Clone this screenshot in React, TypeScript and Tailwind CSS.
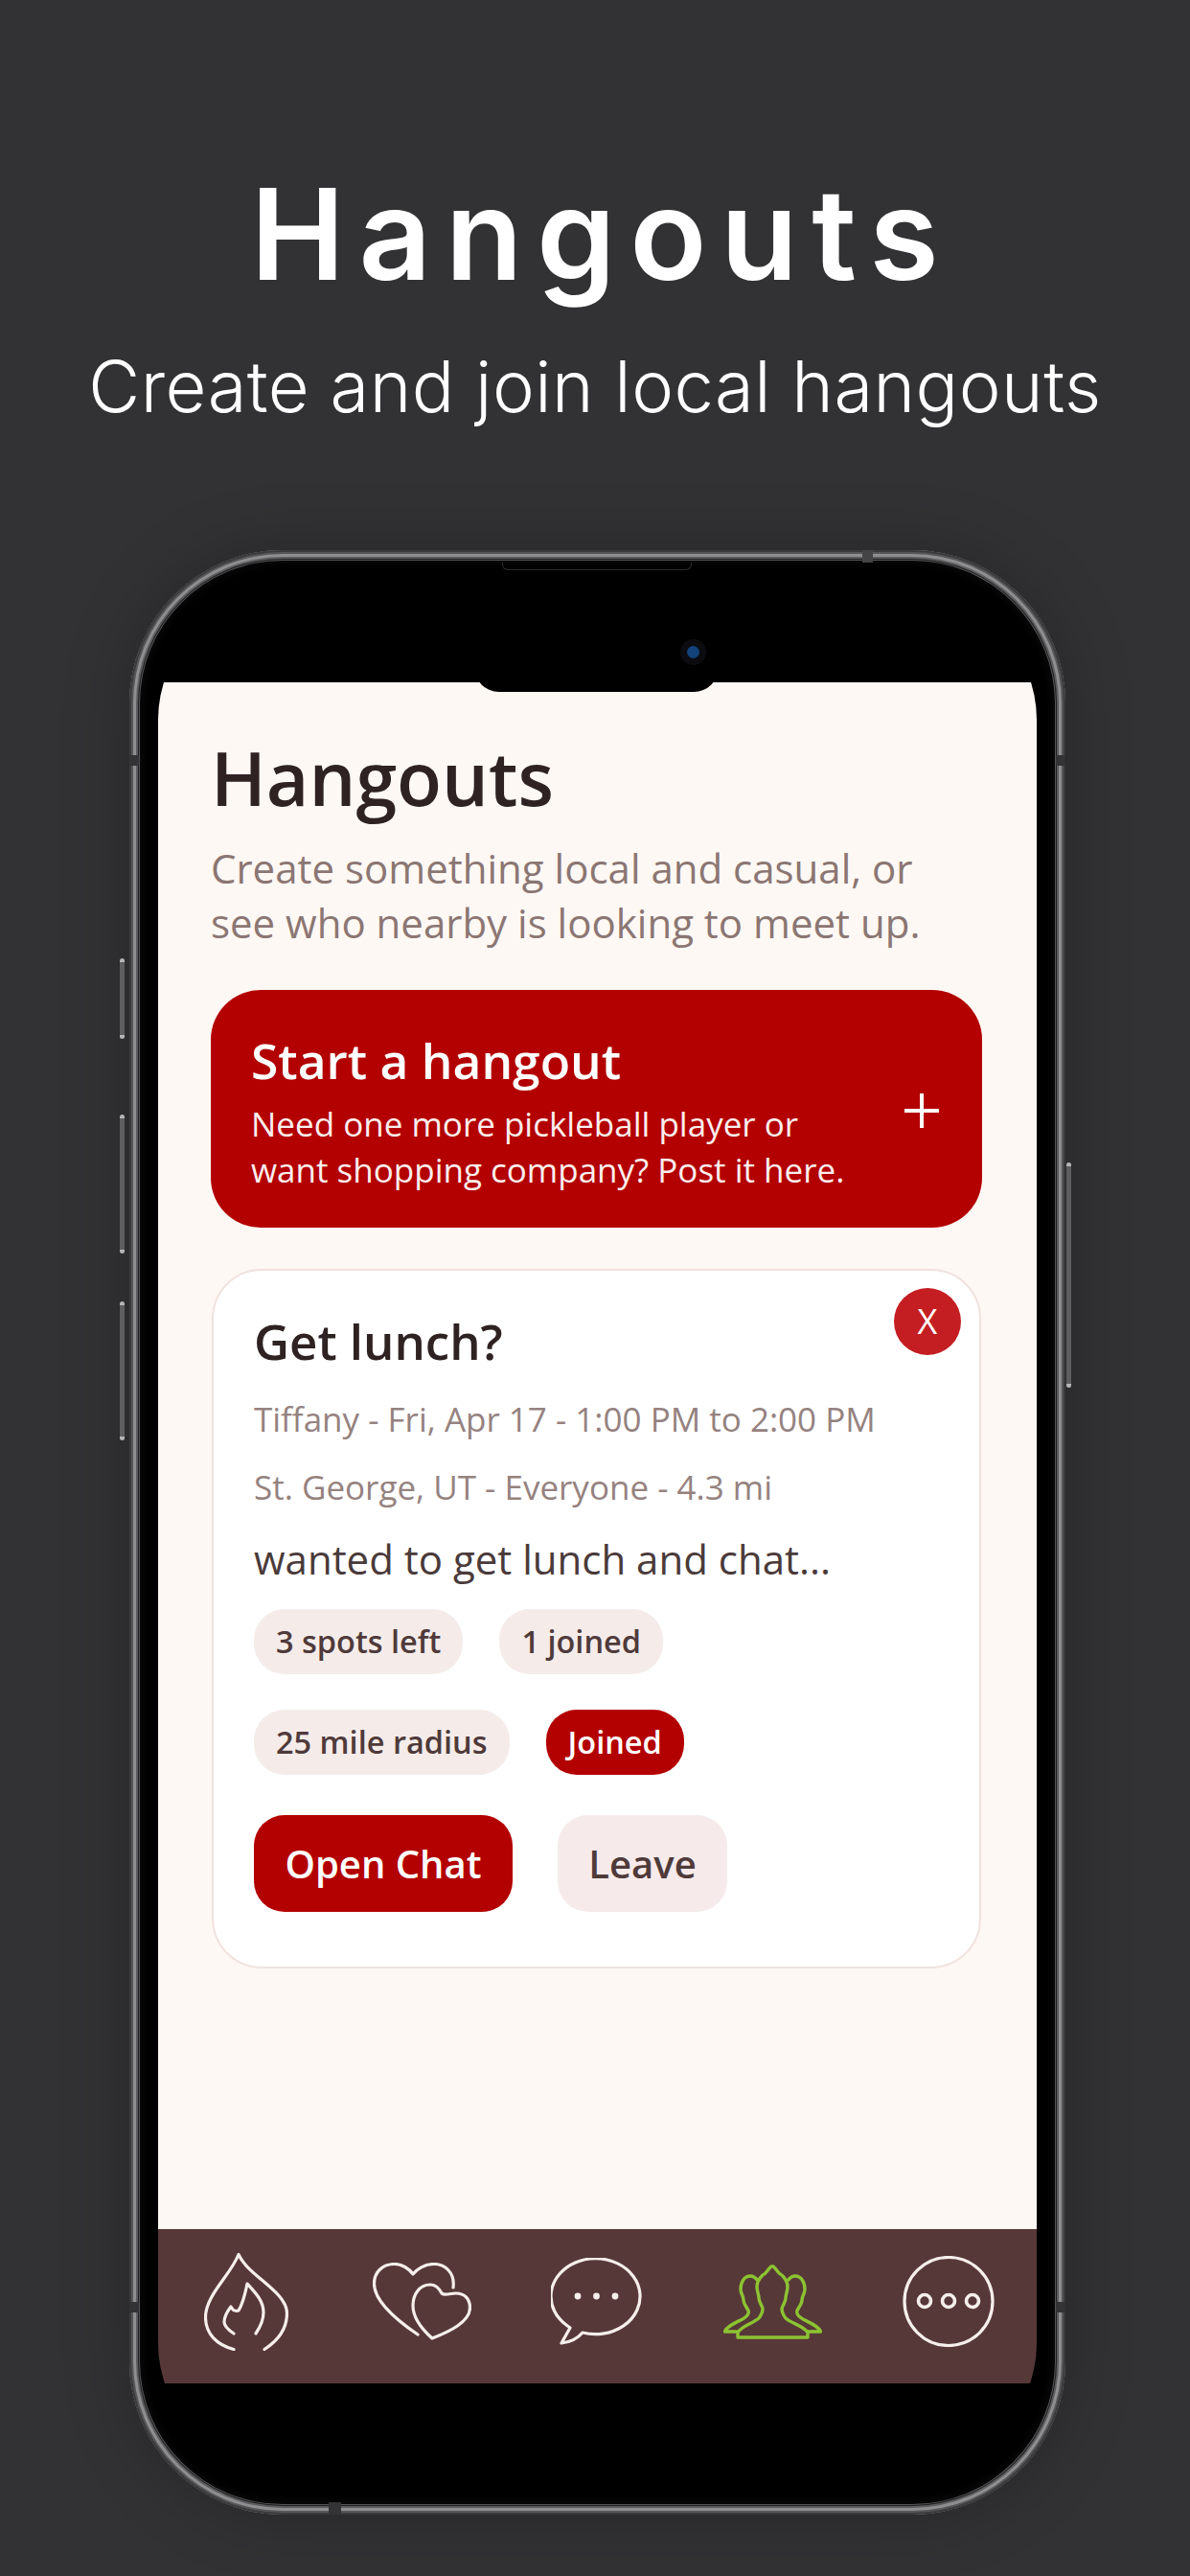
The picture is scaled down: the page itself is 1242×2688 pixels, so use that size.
import React from 'react';

const sans = "font-['Open_Sans','Noto_Sans',sans-serif]";

const FlameIcon = () => (
  <svg width="88" height="102" viewBox="0 0 88 102" fill="none" stroke="#f6efeb" strokeWidth="3.2" strokeLinecap="round" strokeLinejoin="round">
    <path d="M31 100.5 C13 96 1.5 84 1.5 67 C1.5 44 27 24 36 1.5 C46 24 86.5 40 86.5 63 C86.5 80 76 92 63 100.5" />
    <path d="M31 84 C25 80 21 76 21 72 C21 65 25 60 28 56 C30 60 32 61 36 60 C41 52 43 42 45 32 C54 42 62 50 62 62 C62 70 58 78 54 84" />
  </svg>
);

const HeartsIcon = () => (
  <svg width="103" height="81" viewBox="0 0 103 81" fill="none" stroke="#f6efeb" strokeWidth="3.2" strokeLinecap="round" strokeLinejoin="round">
    <path d="M84 26 C86 10 75 1.5 64 1.5 C54 1.5 46 7 42 12 C38 6 30 1.5 23 1.5 C10 1.5 1.5 10 1.5 22 C1.5 40 25 60 47 75" />
    <path d="M72 32 C69 26 65 23 60 23 C49 23 42 33 42 45 C42 58 52 70 62 79 C80 72 101.5 62 101.5 47 C101.5 38 96 32 87 32 C80 32 75 35 72 32 Z" />
  </svg>
);

const ChatIcon = () => (
  <svg width="96" height="91" viewBox="0 0 96 91" fill="none" stroke="#f6efeb" strokeWidth="3.2" strokeLinecap="round" strokeLinejoin="round">
    <path d="M33 78 A46.5 39.5 0 1 0 16 70 L20 73 L11 89 C20 88 28 84 33 78 Z" />
    <circle cx="28" cy="40" r="3.4" fill="#f6efeb" stroke="none" />
    <circle cx="47.5" cy="40" r="3.4" fill="#f6efeb" stroke="none" />
    <circle cx="67" cy="40" r="3.4" fill="#f6efeb" stroke="none" />
  </svg>
);

const PeopleIcon = () => (
  <svg width="103" height="78" viewBox="0 0 103 78" fill="none" stroke="#8cc332" strokeWidth="3.4" strokeLinejoin="round">
    <path d="M15 76 L88 76 L88 71 C84 64 72 62 65 56 C62 52 61 49 61 46 C62 42 65 39 65 35 C65 31 67 28 67 23 C67 18 64 14 61 11 C58 10 57 7 54 4 C52 1 50 1 48 4 C45 7 44 10 41 11 C38 14 35 18 35 23 C35 28 37 31 37 35 C37 39 40 42 41 46 C41 49 40 52 37 56 C30 62 19 64 15 71 Z" />
    <path d="M15 70 L1.5 70 C3 65 12 61 20 57 C25 54 27 51 26 48 C24 44 21 41 21 37 C21 33 18 30 18 26 C18 18 22 12 28 12 C31 12 34 14 36 17" />
    <path d="M88 70 L101.5 70 C100 65 91 61 83 57 C78 54 76 51 77 48 C79 44 82 41 82 37 C82 33 85 30 85 26 C85 18 81 12 75 12 C72 12 69 14 67 17" />
  </svg>
);

const MoreIcon = () => (
  <svg width="96" height="95" viewBox="0 0 96 95" fill="none" stroke="#f6efeb" strokeWidth="3.2">
    <circle cx="48" cy="47.5" r="46" />
    <circle cx="23" cy="47" r="6.5" strokeWidth="3.6" />
    <circle cx="48" cy="47" r="6.5" strokeWidth="3.6" />
    <circle cx="73" cy="47" r="6.5" strokeWidth="3.6" />
  </svg>
);

const Chip = ({ label }: { label: string }) => (
  <span className="flex h-[68px] items-center rounded-[32px] bg-[#f5ecea] px-[23px] text-[32.5px] font-semibold text-[#4f3a3a]">
    {label}
  </span>
);

const App: React.FC = () => {
  return (
    <div className={`h-[2688px] w-[1242px] overflow-hidden bg-[#323234] ${sans}`}>
      <header className="pt-[164px] text-center text-white font-['Inter',sans-serif]">
        <h1 className="pl-[14px] text-[132px] font-semibold leading-[160px] tracking-[14.5px]">Hangouts</h1>
        <p className="mt-[33px] text-[74px] font-light leading-[92px] tracking-[0.5px]">Create and join local hangouts</p>
      </header>

      {/* phone frame */}
      <div className="relative ml-[135px] mt-[125px] h-[2050px] w-[977px] rounded-[160px] bg-black pl-[30px] pr-[30px] pt-[47px] shadow-[0_0_70px_rgba(0,0,0,0.22),inset_0_0_0_2px_#3a3a3c,inset_0_0_0_4px_#565658,inset_0_0_0_7px_#8e8e90,inset_0_0_0_9px_#5c5c5e,inset_0_0_0_10px_#1e1e20,inset_0_0_0_11px_#555557,inset_0_0_10px_13px_#0c0c0c]">
        {/* side buttons */}
        <div className="absolute -left-[10px] top-[426px] h-[84px] w-[5px] rounded-sm border-y-4 border-y-[#b5b5b7] bg-[#5e5e60]" />
        <div className="absolute -left-[10px] top-[589px] h-[145px] w-[5px] rounded-sm border-y-4 border-y-[#b5b5b7] bg-[#5e5e60]" />
        <div className="absolute -left-[10px] top-[784px] h-[145px] w-[5px] rounded-sm border-y-4 border-y-[#b5b5b7] bg-[#5e5e60]" />
        <div className="absolute -right-[6px] top-[639px] h-[235px] w-[5px] rounded-sm border-y-4 border-y-[#b5b5b7] bg-[#5e5e60]" />

        {/* antenna bands */}
        <div className="absolute left-[765px] top-0 h-[13px] w-[11px] bg-[#444446]" />
        <div className="absolute bottom-0 left-[208px] h-[13px] w-[13px] bg-[#333335]" />
        <div className="absolute left-0 top-[214px] h-[11px] w-[10px] bg-[#333335]" />
        <div className="absolute right-0 top-[214px] h-[11px] w-[10px] bg-[#333335]" />
        <div className="absolute bottom-[211px] left-0 h-[11px] w-[10px] bg-[#333335]" />
        <div className="absolute bottom-[211px] right-0 h-[11px] w-[10px] bg-[#333335]" />

        {/* speaker slit */}
        <div className="absolute left-[389px] top-[13px] h-[8px] w-[198px] rounded-b-md border-x border-b border-[#2c2c2e]" />

        <div className="relative h-[1954px] w-[917px] overflow-hidden rounded-[130px]">
          <div className="h-[91px] bg-black" />
          {/* notch */}
          <div className="absolute left-[330px] top-[39px] h-[62px] w-[255px] rounded-b-[26px] bg-black" />
          <div className="absolute left-[545px] top-[46px] flex h-[27px] w-[27px] items-center justify-center rounded-full bg-[#0b0b10]">
            <div className="h-[13px] w-[13px] rounded-full bg-[#12427a]" />
          </div>

          <main className="h-[1614px] bg-[#fef8f4] pl-[55px] pr-[57px] pt-[50px]">
            <h2 className="text-[77px] font-semibold leading-[100px] text-[#2f2222]">Hangouts</h2>
            <p className="mt-[16px] text-[42px] leading-[56.5px] text-[#8b7673]">
              Create something local and casual, or
              <br />
              see who nearby is looking to meet up.
            </p>

            <button className="mt-[42px] flex h-[248px] w-full items-center justify-between rounded-[52px] bg-[#b30000] pl-[42px] pr-[44px] pt-[3px] text-left text-white">
              <span>
                <span className="block text-[51.5px] font-semibold leading-[66px]">Start a hangout</span>
                <span className="mt-[10px] block text-[35px] leading-[48px] text-[#fbeeee]">
                  Need one more pickleball player or
                  <br />
                  want shopping company? Post it here.
                </span>
              </span>
              <svg width="38" height="38" viewBox="0 0 38 38" stroke="#fff" strokeWidth="4">
                <path d="M19 1 V37 M1 19 H37" />
              </svg>
            </button>

            <section className="relative mx-[1px] mt-[43px] h-[730px] rounded-[52px] border-2 border-[#f0e2de] bg-white pl-[42px] pt-[38px]">
              <button className="absolute right-[19px] top-[18px] flex h-[70px] w-[70px] items-center justify-center rounded-full bg-[#c41e22] text-[36px] text-white">
                X
              </button>
              <h3 className="text-[51px] font-semibold leading-[70px] text-[#2f2222]">Get lunch?</h3>
              <p className="mt-[23px] text-[35px] leading-[48px] text-[#95827f]">Tiffany - Fri, Apr 17 - 1:00 PM to 2:00 PM</p>
              <p className="mt-[23px] text-[35px] leading-[48px] text-[#95827f]">St. George, UT - Everyone - 4.3 mi</p>
              <p className="mt-[23px] text-[42px] leading-[56px] text-[#4a3a3a]">wanted to get lunch and chat...</p>
              <div className="mt-[24px] flex flex-wrap gap-x-[38px] gap-y-[37px] pr-[200px]">
                <Chip label="3 spots left" />
                <Chip label="1 joined" />
                <Chip label="25 mile radius" />
                <span className="flex h-[68px] items-center rounded-[32px] bg-[#b30000] px-[23px] text-[32.5px] font-semibold text-white">
                  Joined
                </span>
              </div>
              <div className="mt-[42px] flex gap-[47px]">
                <button className="h-[101px] w-[270px] rounded-[32px] bg-[#b30000] text-[40px] font-semibold text-white">Open Chat</button>
                <button className="h-[101px] w-[177px] rounded-[32px] bg-[#f6eaea] text-[40px] font-semibold text-[#4f3a3a]">Leave</button>
              </div>
            </section>
          </main>

          <nav className="grid h-[161px] grid-cols-5 items-center justify-items-center bg-[#573838] pb-[10px]">
            <FlameIcon />
            <HeartsIcon />
            <ChatIcon />
            <PeopleIcon />
            <MoreIcon />
          </nav>
          <div className="h-[88px] bg-black" />
        </div>
      </div>
    </div>
  );
};

export default App;
